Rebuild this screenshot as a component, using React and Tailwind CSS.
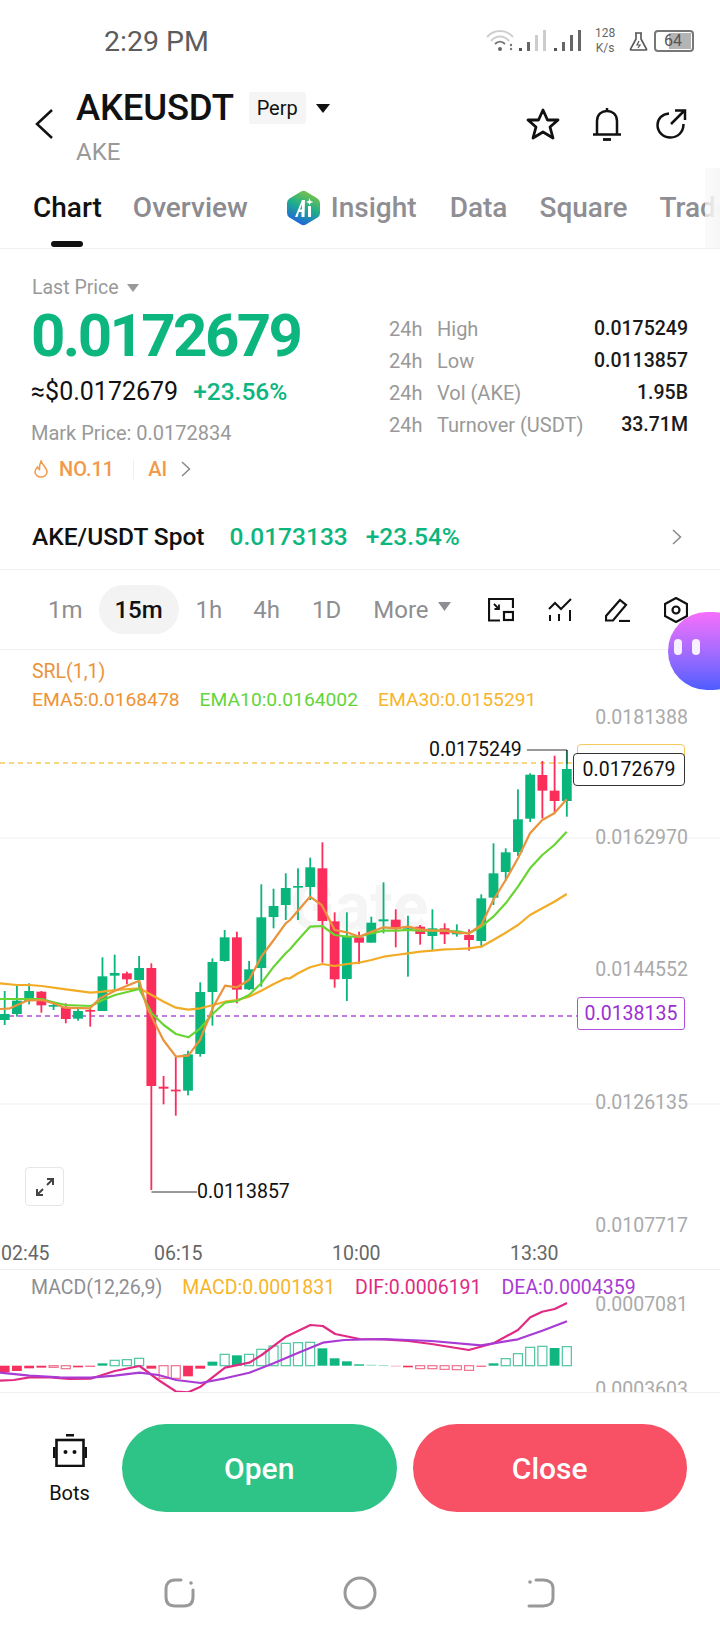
import React from 'react'

const GREEN = '#0ab57b'
const RED = '#fb2d5b'

// candle rows: [wickTop, wickBottom, bodyTop, bodyBottom, up]
const LEFT_CANDLES = [
  [393, 495, 462, 480, 1], [378, 470, 422, 462, 1], [370, 433, 393, 423, 1], [393, 458, 395, 436, 0],
  [425, 450, 435, 440, 1], [430, 490, 442, 477, 0], [447, 482, 453, 476, 1], [445, 500, 450, 455, 0],
  [292, 453, 349, 453, 1], [284, 390, 339, 347, 1], [335, 373, 340, 358, 0], [288, 390, 324, 360, 1],
  [310, 990, 324, 678, 0], [648, 733, 680, 686, 0], [590, 767, 689, 694, 0], [572, 706, 583, 692, 1],
  [367, 590, 396, 582, 1], [295, 497, 306, 396, 1], [210, 305, 232, 303, 1], [215, 430, 232, 389, 0],
  [303, 390, 328, 388, 1], [73, 380, 172, 324, 1], [86, 205, 138, 171, 1], [40, 180, 84, 135, 1],
].map(r => [860 + r[0] / 3, 860 + r[1] / 3, 860 + r[2] / 3, 860 + r[3] / 3, r[4]])

const RIGHT_CANDLES = [
  [385, 540, 438, 443, 1], [353, 480, 382, 441, 1], [307, 668, 385, 543, 0], [517, 743, 544, 718, 0],
  [517, 783, 590, 717, 1], [575, 672, 592, 608, 0], [530, 608, 548, 608, 1], [427, 580, 538, 544, 1],
  [508, 622, 539, 567, 0], [527, 710, 565, 572, 1], [555, 614, 560, 582, 0], [508, 632, 565, 588, 1],
  [550, 612, 565, 583, 0], [553, 590, 572, 583, 1], [568, 632, 585, 600, 0], [463, 622, 475, 603, 1],
  [310, 495, 400, 473, 1], [325, 422, 337, 396, 1], [148, 348, 238, 336, 1], [100, 246, 104, 236, 1],
  [63, 235, 105, 152, 0], [47, 220, 152, 183, 0], [30, 230, 87, 183, 1],
].map(r => [740 + r[0] / 3, 740 + r[1] / 3, 740 + r[2] / 3, 740 + r[3] / 3, r[4]])

const CANDLES = [...LEFT_CANDLES, ...RIGHT_CANDLES]

const joinLine = (a, b) => [
  ...a.map(([x, y]) => `${(x / 3).toFixed(1)},${(860 + y / 3).toFixed(1)}`),
  ...b.map(([x, y]) => `${(290 + x / 3).toFixed(1)},${(740 + y / 3).toFixed(1)}`),
].join(' ')

const EMA5 = joinLine(
  [[0, 447], [30, 445], [80, 422], [125, 420], [160, 430], [195, 443], [270, 445], [300, 415], [345, 392], [418, 362], [440, 440], [490, 540], [528, 590], [565, 587], [600, 540], [640, 440], [675, 377], [711, 382], [747, 360], [784, 290], [821, 240], [857, 190]],
  [[0, 540], [60, 470], [95, 495], [134, 570], [171, 577], [207, 590], [244, 575], [281, 562], [317, 565], [354, 560], [391, 568], [427, 572], [464, 572], [500, 578], [537, 580], [574, 555], [610, 480], [647, 420], [684, 355], [720, 280], [757, 240], [793, 220], [830, 178]],
)
const EMA10 = joinLine(
  [[0, 417], [50, 417], [88, 417], [125, 417], [160, 427], [198, 435], [272, 438], [308, 420], [345, 405], [418, 387], [455, 460], [491, 495], [528, 522], [565, 532], [601, 505], [640, 460], [675, 428], [711, 423], [747, 405], [784, 370], [821, 320], [857, 280]],
  [[0, 628], [24, 600], [60, 560], [97, 558], [134, 585], [171, 590], [207, 590], [244, 580], [281, 572], [317, 572], [354, 570], [391, 572], [427, 572], [464, 572], [500, 575], [537, 580], [574, 560], [610, 530], [647, 490], [684, 440], [720, 385], [757, 345], [793, 315], [830, 275]],
)
const EMA30 = joinLine(
  [[0, 370], [50, 375], [88, 375], [125, 378], [198, 388], [272, 398], [308, 395], [345, 390], [418, 385], [455, 405], [491, 425], [528, 443], [565, 449], [601, 445], [640, 435], [675, 425], [711, 420], [747, 410], [784, 392], [821, 372], [857, 355]],
  [[0, 715], [24, 700], [60, 682], [97, 672], [134, 678], [171, 672], [207, 668], [244, 660], [281, 650], [317, 645], [354, 640], [391, 635], [427, 632], [464, 628], [500, 627], [537, 625], [574, 620], [610, 600], [647, 578], [684, 555], [720, 525], [757, 505], [793, 485], [830, 462]],
)

// macd bars: [value top or bottom edge, filled, faint]
const MACD_BARS = [
  [337, 1], [333, 1], [325, 1], [323, 1], [322, 0], [326, 0], [322, 1], [320, 1], [310, 1], [301, 0], [299, 0], [295, 0],
  [326, 1], [355, 0], [355, 0], [349, 1], [326, 1], [305, 1], [283, 0], [286, 1], [283, 0], [268, 0], [258, 0], [250, 0],
  [248, 0], [247, 0], [265, 1], [295, 1], [304, 1], [313, 1], [314, 1, 1], [315, 1, 1], [318, 1, 1], [322, 1], [326, 0], [326, 0],
  [328, 0], [329, 0], [331, 0], [320, 1], [310, 1], [296, 0], [281, 0], [262, 0], [259, 0], [264, 1], [260, 0],
]

const macdLine = pts => pts.map(([x, y]) => `${(x / 2.178).toFixed(1)},${(1260 + y / 3).toFixed(1)}`).join(' ')
const DIF = macdLine([[0, 362], [30, 360], [64, 352], [110, 352], [150, 357], [197, 356], [250, 333], [304, 318], [345, 360], [384, 395], [410, 397], [437, 380], [490, 323], [543, 308], [570, 285], [623, 230], [676, 195], [703, 198], [730, 222], [783, 237], [836, 238], [889, 243], [940, 252], [1021, 270], [1075, 250], [1128, 210], [1155, 172], [1181, 155], [1208, 147], [1235, 129]])
const DEA = macdLine([[0, 338], [64, 347], [130, 352], [197, 353], [250, 347], [304, 338], [345, 345], [384, 360], [437, 369], [490, 355], [543, 338], [596, 310], [650, 278], [703, 248], [750, 240], [836, 237], [940, 243], [1048, 256], [1128, 238], [1181, 212], [1235, 184]])

const candleX = i => 4.7 + 12.22 * i

function StatusIcons() {
  return (
    <div className="flex items-center ml-auto pr-[26px]">
      <svg width="36" height="24" viewBox="0 0 36 24" fill="none" className="mt-[-2px]">
        <path d="M8 9C15 1 27 1 34 9" stroke="#cfcfcf" strokeWidth="2" />
        <path d="M12 13C17 7 25 7 30 13" stroke="#cfcfcf" strokeWidth="2" />
        <path d="M16 16C19 13 23 13 26 16" stroke="#777" strokeWidth="2" />
        <circle cx="21" cy="21" r="2" fill="#666" />
        <circle cx="32" cy="17" r="1.2" fill="#777" />
        <circle cx="32" cy="21" r="1.2" fill="#777" />
      </svg>
      <svg width="62" height="24" viewBox="0 0 62 24" className="ml-[4px] mr-[14px]">
        <rect x="0" y="19" width="3" height="3" fill="#555" />
        <rect x="8" y="13" width="3" height="9" fill="#666" />
        <rect x="16" y="6" width="3" height="16" fill="#ccc" />
        <rect x="24" y="1" width="3" height="21" fill="#ccc" />
        <rect x="35" y="19" width="3" height="3" fill="#555" />
        <rect x="43" y="13" width="3" height="9" fill="#666" />
        <rect x="51" y="6" width="3" height="16" fill="#666" />
        <rect x="59" y="1" width="3" height="21" fill="#666" />
      </svg>
      <div className="w-[20px] text-[12px] leading-[15px] text-[#666] text-center mr-[14px]">128<br />K/s</div>
      <svg width="19" height="19" viewBox="0 0 19 19" fill="none" stroke="#555" strokeWidth="1.6" className="mr-[6px]">
        <path d="M6 1H13M7 1V7L1.5 17C1 18 2 18 2.5 18H16.5C17 18 18 18 17.5 17L12 7V1" />
        <path d="M10 9L8 13H11L9 16" strokeWidth="1.2" />
      </svg>
      <div className="relative w-[40px] h-[22px] rounded-[4px] border-2 border-[#777] flex items-center">
        <div className="absolute left-[13px] right-[1px] top-[1px] bottom-[1px] bg-[#b4b4b4]" />
        <span className="relative pl-[8px] text-[16px] leading-none text-[#555]">64</span>
      </div>
    </div>
  )
}

function AiLogo() {
  return (
    <svg width="33" height="36" viewBox="0 0 33 36" className="ml-[6px] mr-[11px] shrink-0">
      <defs>
        <linearGradient id="hexFill" x1="0.8" y1="0" x2="0.4" y2="1">
          <stop offset="0" stopColor="#8bc53f" />
          <stop offset="0.5" stopColor="#1fae8a" />
          <stop offset="1" stopColor="#1f63e0" />
        </linearGradient>
      </defs>
      <path d="M14 1.5Q16.5 0 19 1.5L30.500 8.500Q33 10 33 13V23Q33 26 30.500 27.500L19 34.500Q16.500 36 14 34.500L2.500 27.500Q0 26 0 23V13Q0 10 2.500 8.500Z" fill="url(#hexFill)" />
      <path d="M8 27L15 10H18L17.500 27H14.500V22H12L10.500 27ZM13 19.500H14.800L15 14.500Z" fill="#fff" />
      <rect x="21" y="16" width="3" height="11" fill="#fff" />
      <path d="M22.500 8L23.500 11L26.500 12L23.500 13L22.500 15L21.500 13L19 12L21.500 11Z" fill="#fff" />
    </svg>
  )
}

function ChartIcons() {
  return (
    <div className="flex items-center ml-auto pr-[32px]">
      <svg width="26" height="24" viewBox="0 0 26 24" fill="none" stroke="#111" strokeWidth="2.2">
        <path d="M12 22.500H1V1H25V10" />
        <path d="M6 6L11 11M11 6.500V11H6.500" strokeWidth="1.800" />
        <rect x="16" y="14" width="9" height="8" />
      </svg>
      <svg width="24" height="24" viewBox="0 0 24 24" fill="none" stroke="#111" strokeWidth="2" className="ml-[34px]">
        <path d="M1 11L7 5L13 11L23 1" />
        <path d="M2 17V23M11 16V23M22 12V23" />
      </svg>
      <svg width="25" height="24" viewBox="0 0 25 24" fill="none" stroke="#111" strokeWidth="2.2" className="ml-[33px]">
        <path d="M1 18L15 2L21 7L8 22.500H1Z" />
        <path d="M14 23H25" />
      </svg>
      <svg width="24" height="26" viewBox="0 0 24 26" fill="none" stroke="#111" strokeWidth="2.2" className="ml-[34px]">
        <path d="M12 1L23 7V19L12 25L1 19V7Z" />
        <circle cx="12" cy="13" r="3.500" />
      </svg>
    </div>
  )
}

function PriceChart() {
  return (
    <svg width="720" height="619" viewBox="0 650 720 619" className="block relative">
      <line x1="0" x2="720" y1="838" y2="838" stroke="#f0f0f0" />
      <line x1="0" x2="720" y1="1104" y2="1104" stroke="#f0f0f0" />
      <line x1="0" x2="573" y1="763" y2="763" stroke="#f5c95b" strokeWidth="1.300" strokeDasharray="5 4" />
      <line x1="0" x2="577" y1="1016" y2="1016" stroke="#b04fdc" strokeWidth="1.300" strokeDasharray="5 4" />
      {CANDLES.map((c, i) => {
        const x = candleX(i)
        const fill = c[4] ? GREEN : RED
        return (
          <g key={i} fill={fill}>
            <rect x={x - 0.9} y={c[0]} width="1.800" height={c[1] - c[0]} />
            <rect x={x - 4.9} y={c[2]} width="9.800" height={Math.max(c[3] - c[2], 1.5)} />
          </g>
        )
      })}
      <polyline points={EMA30} fill="none" stroke="#f2ab25" strokeWidth="2.200" strokeLinejoin="round" />
      <polyline points={EMA10} fill="none" stroke="#69d432" strokeWidth="2.200" strokeLinejoin="round" />
      <polyline points={EMA5} fill="none" stroke="#e9933c" strokeWidth="2.200" strokeLinejoin="round" />
      {/* high / low markers */}
      <path d="M527 750H567V764" fill="none" stroke="#333" strokeWidth="1" />
      <path d="M151.500 1192H197" fill="none" stroke="#333" strokeWidth="1" />
    </svg>
  )
}

function MacdChart() {
  return (
    <svg width="720" height="122" viewBox="0 1270 720 122" className="block">
      {MACD_BARS.map(([edge, filled, faint], i) => {
        const base = 1365.7
        const y = 1260 + edge / 3
        const up = y < base
        const color = up ? '#10b67f' : '#f5305f'
        const top = Math.min(y, base)
        const h = Math.max(Math.abs(y - base), 0.8)
        if (filled) {
          return <rect key={i} x={candleX(i) - 4.9} y={top} width="9.800" height={h} fill={color} opacity={faint ? 0.45 : 1} />
        }
        return (
          <rect key={i} x={candleX(i) - 4.5} y={top} width="9" height={h} fill="none" stroke={up ? '#4fc4a0' : '#f0708f'} strokeWidth="1.200" />
        )
      })}
      <polyline points={DIF} fill="none" stroke="#e02a83" strokeWidth="2.200" strokeLinejoin="round" />
      <polyline points={DEA} fill="none" stroke="#a93bd4" strokeWidth="2.200" strokeLinejoin="round" />
    </svg>
  )
}

const stats = [
  ['High', '0.0175249'],
  ['Low', '0.0113857'],
  ['Vol (AKE)', '1.95B'],
  ['Turnover (USDT)', '33.71M'],
]

export default function App() {
  return (
    <div className="relative w-[720px] h-[1640px] overflow-hidden bg-white font-['Roboto',sans-serif] text-[#111]">
      {/* Status bar */}
      <div className="flex items-center h-[82px] pl-[104px]">
        <span className="pt-[2px] text-[28.500px] leading-none text-[#5c5c5c]">2:29 PM</span>
        <StatusIcons />
      </div>

      {/* Title */}
      <div className="flex items-start h-[86px] pl-[35px]">
        <svg width="18" height="30" viewBox="0 0 18 30" fill="none" stroke="#111" strokeWidth="2.500" className="mt-[27px]">
          <path d="M17 1L2 15L17 29" />
        </svg>
        <div className="ml-[23px] mt-[6px]">
          <div className="flex items-center h-[40px]">
            <span className="text-[36.500px] leading-[40px] font-medium tracking-[-0.2px]">AKEUSDT</span>
            <span className="ml-[15px] flex items-center justify-center w-[57px] h-[32px] rounded-[3px] bg-[#f5f5f5] text-[20px]">Perp</span>
            <svg width="14" height="9" viewBox="0 0 14 9" className="ml-[10px]">
              <path d="M0 0H14L7 9Z" fill="#111" />
            </svg>
          </div>
          <div className="mt-[11px] text-[24px] leading-[26px] text-[#999]">AKE</div>
        </div>
        <div className="flex items-center ml-auto pr-[33px] mt-[25px]">
          <svg width="34" height="32" viewBox="0 0 34 32" fill="none" stroke="#111" strokeWidth="2.800" strokeLinejoin="round">
            <path d="M17 2L21.500 12H32L24 19L27 30L17 24L7 30L10 19L2 12H12.500Z" />
          </svg>
          <svg width="30" height="34" viewBox="0 0 30 34" fill="none" stroke="#111" strokeWidth="2.500" className="ml-[32px]">
            <path d="M15 1V4M5 27V14C5 7 10 4 15 4C20 4 25 7 25 14V27M1 27.500H29" />
            <path d="M11 32.500H19" strokeWidth="2.800" />
          </svg>
          <svg width="31" height="30" viewBox="0 0 31 30" fill="none" stroke="#111" strokeWidth="2.500" className="ml-[34px]">
            <path d="M13 4.500C6 5 1.500 10 1.500 16C1.500 23 7 28.500 14.500 28.500C22 28.500 27.500 23 27.500 15" />
            <path d="M15 15L28 2M19 1.500H29V11" />
          </svg>
        </div>
      </div>

      {/* Tabs */}
      <div className="relative flex items-center h-[81px] pl-[33px] gap-[33px] border-b border-[#efefef] text-[28px] text-[#8e8e93] whitespace-nowrap overflow-hidden">
        <span className="relative font-medium text-[#111]">
          Chart
          <span className="absolute left-[18px] top-[54px] w-[32px] h-[6px] rounded-full bg-[#111]" />
        </span>
        <span className="ml-[-2px] font-medium text-[#8b8b90]">Overview</span>
        <span className="flex items-center font-medium">
          <AiLogo />
          Insight
        </span>
        <span className="font-medium">Data</span>
        <span className="ml-[-1px] font-medium">Square</span>
        <span className="ml-[-1px] font-medium">Trade</span>
        <div className="absolute right-0 top-0 bottom-0 w-[15px] bg-gradient-to-r from-[#f8f8f8]/70 to-[#f7f7f7]" />
      </div>

      {/* Price block */}
      <div className="flex h-[256px]">
        <div className="pl-[32px] pt-[27px] w-[389px]">
          <div className="flex items-center text-[19.500px] leading-[24px] text-[#999]">
            Last Price
            <svg width="12" height="8" viewBox="0 0 12 8" className="ml-[8px]"><path d="M0 0H12L6 8Z" fill="#999" /></svg>
          </div>
          <div className="mt-[6px] ml-[-1px] text-[60px] leading-[60px] font-bold tracking-[-2.600px] text-[#0cb67e]">0.0172679</div>
          <div className="mt-[11px] ml-[-1px] flex items-baseline leading-[30px] text-[25px]">
            <span>≈$0.0172679</span>
            <span className="ml-[15px] text-[24.500px] font-medium text-[#0cb67e]">+23.56%</span>
          </div>
          <div className="mt-[14px] ml-[-1px] text-[20px] leading-[24px] text-[#999]">Mark Price: 0.0172834</div>
          <div className="mt-[12px] flex items-center text-[20px] leading-[24px] font-medium text-[#f2994a]">
            <svg width="16" height="18" viewBox="0 0 16 18" fill="none" stroke="#f2994a" strokeWidth="1.500" className="ml-[1px]">
              <path d="M8 1C9 5 14 7 14 12C14 15 11 17 8 17C5 17 2 15 2 12C2 9.500 3.500 8 4.500 7C5 8.500 5.500 9 6.500 9.500C6.500 7 6.500 4 8 1Z" />
            </svg>
            <span className="ml-[10px]">NO.11</span>
            <span className="ml-[19px] mr-[14px] w-[1px] h-[20px] bg-[#f0f0f0]" />
            <span>AI</span>
            <svg width="10" height="16" viewBox="0 0 10 16" fill="none" stroke="#888" strokeWidth="1.500" className="ml-[14px]"><path d="M1 1L8.500 8L1 15" /></svg>
          </div>
        </div>
        <div className="w-[299px] pt-[64px] text-[20px] text-[#999]">
          {stats.map(([label, value]) => (
            <div key={label} className="flex items-center h-[32px]">
              <span className="w-[48px]">24h</span>
              <span>{label}</span>
              <span className="ml-auto text-[19.500px] font-medium text-[#1a1a1a]">{value}</span>
            </div>
          ))}
        </div>
      </div>

      {/* Spot row */}
      <div className="flex items-center h-[65px] pl-[32px] pr-[38px] border-b border-[#efefef] text-[24.500px]">
        <span className="font-medium">AKE/USDT Spot</span>
        <span className="ml-[25px] font-medium text-[#0cb67e]">0.0173133</span>
        <span className="ml-[18px] font-medium text-[#0cb67e]">+23.54%</span>
        <svg width="10" height="16" viewBox="0 0 10 16" fill="none" stroke="#888" strokeWidth="1.500" className="ml-auto"><path d="M1 1L8.500 8L1 15" /></svg>
      </div>

      {/* Interval row */}
      <div className="flex items-center h-[80px] border-b border-[#efefef] pl-[48px] text-[24px] text-[#8e8e93]">
        <span>1m</span>
        <span className="ml-[16px] flex items-center justify-center w-[80px] h-[49px] rounded-full bg-[#f3f3f3] font-medium text-[#111]">15m</span>
        <span className="ml-[17px]">1h</span>
        <span className="ml-[31px]">4h</span>
        <span className="ml-[32px]">1D</span>
        <span className="ml-[32px]">More</span>
        <svg width="13" height="9" viewBox="0 0 13 9" className="ml-[9px] mt-[-6px]"><path d="M0 0H13L6.500 9Z" fill="#8e8e93" /></svg>
        <ChartIcons />
      </div>

      {/* Main chart */}
      <div className="relative h-[620px] border-b border-[#efefef] text-[19.500px] leading-[24px]">
        <span className="absolute left-[290px] top-[224px] text-[66px] leading-[66px] font-bold text-[#f5f5f5]">Gate</span>
        <PriceChart />
        <div className="absolute left-[32px] top-[10px] text-[#e9933c]">SRL(1,1)</div>
        <div className="absolute left-[32px] top-[38px] flex gap-[20px] whitespace-nowrap text-[19.250px]">
          <span className="text-[#ee9336]">EMA5:0.0168478</span>
          <span className="text-[#62d53a]">EMA10:0.0164002</span>
          <span className="text-[#f8b52c]">EMA30:0.0155291</span>
        </div>
        <span className="absolute right-[32px] top-[56px] text-[#aaa]">0.0181388</span>
        <span className="absolute right-[32px] top-[176px] text-[#aaa]">0.0162970</span>
        <span className="absolute right-[32px] top-[308px] text-[#aaa]">0.0144552</span>
        <span className="absolute right-[32px] top-[441px] text-[#aaa]">0.0126135</span>
        <span className="absolute right-[32px] top-[564px] text-[#aaa]">0.0107717</span>
        <span className="absolute left-[429px] top-[88px]">0.0175249</span>
        <div className="absolute left-[577px] top-[94px] w-[108px] h-[36px] rounded-[4px] border border-[#f5c95b]" />
        <div className="absolute left-[573px] top-[103px] w-[112px] h-[33px] rounded-[4px] border border-[#333] bg-white flex items-center justify-center">0.0172679</div>
        <div className="absolute left-[577px] top-[347px] w-[108px] h-[33px] rounded-[3px] border border-[#b04fdc] bg-white flex items-center justify-center text-[#9b30d0]">0.0138135</div>
        <span className="absolute left-[197px] top-[530px]">0.0113857</span>
        <div className="absolute left-[25px] top-[517px] w-[39px] h-[39px] rounded-[4px] border border-[#e6e6e6] bg-white flex items-center justify-center">
          <svg width="20" height="20" viewBox="0 0 20 20" fill="none" stroke="#444" strokeWidth="2">
            <path d="M2 18L8 12M2 12V18H8M18 2L12 8M12 2H18V8" />
          </svg>
        </div>
        <span className="absolute left-[1px] top-[592px] text-[#666]">02:45</span>
        <span className="absolute left-[154px] top-[592px] text-[#666]">06:15</span>
        <span className="absolute left-[332px] top-[592px] text-[#666]">10:00</span>
        <span className="absolute left-[510px] top-[592px] text-[#666]">13:30</span>
      </div>

      {/* MACD */}
      <div className="relative h-[123px] overflow-hidden border-b border-[#efefef] text-[19.500px] leading-[24px]">
        <MacdChart />
        <div className="absolute left-[31px] top-[6px] flex gap-[20px] whitespace-nowrap">
          <span className="text-[#8e8e93]">MACD(12,26,9)</span>
          <span className="text-[#f8b52c]">MACD:0.0001831</span>
          <span className="text-[#e02a83]">DIF:0.0006191</span>
          <span className="text-[#a93bd4]">DEA:0.0004359</span>
        </div>
        <span className="absolute right-[32px] top-[23px] text-[#aaa]">0.0007081</span>
        <span className="absolute right-[32px] top-[108px] text-[#aaa]">0.0003603</span>
      </div>

      {/* Actions */}
      <div className="flex items-start pl-[50px] pr-[33px] pt-[31px]">
        <div className="flex flex-col items-center w-[39px]">
          <svg width="34" height="33" viewBox="0 0 34 33" fill="none" className="mt-[10px]">
            <rect x="13" y="0" width="8" height="2.500" fill="#111" />
            <rect x="3.500" y="6" width="27" height="26" stroke="#111" strokeWidth="2.600" />
            <rect x="0" y="13" width="2.500" height="11" fill="#111" />
            <rect x="31.500" y="13" width="2.500" height="11" fill="#111" />
            <circle cx="12.500" cy="18" r="2" fill="#111" />
            <circle cx="21.500" cy="18" r="2" fill="#111" />
          </svg>
          <span className="mt-[14px] text-[20px] leading-[24px]">Bots</span>
        </div>
        <button className="ml-[33px] w-[275px] h-[88px] rounded-full bg-[#2ec487] text-white text-[30px] font-medium">Open</button>
        <button className="ml-[16px] w-[275px] h-[88px] rounded-full bg-[#f85064] text-white text-[30px] font-medium">Close</button>
      </div>

      {/* Nav bar */}
      <div className="flex items-center mt-[64px] pl-[164px]">
        <svg width="32" height="30" viewBox="0 0 32 30" fill="none" stroke="#999" strokeWidth="3">
          <path d="M17 2H11C5 2 2 6 2 11V19C2 25 5 28 11 28H20C26 28 29 25 29 19V12" strokeLinecap="round" />
          <circle cx="27" cy="5" r="1.800" fill="#999" stroke="none" />
        </svg>
        <svg width="34" height="34" viewBox="0 0 34 34" fill="none" stroke="#999" strokeWidth="3" className="ml-[147px]">
          <circle cx="17" cy="17" r="15" />
        </svg>
        <svg width="28" height="30" viewBox="0 0 28 30" fill="none" stroke="#999" strokeWidth="3" className="ml-[150px]">
          <path d="M9 2H16C22 2 26 5 26 10V20C26 25 22 28 16 28H2" strokeLinecap="round" />
          <circle cx="3" cy="4" r="1.800" fill="#999" stroke="none" />
        </svg>
      </div>

      {/* Floating assistant */}
      <div className="absolute left-[668px] top-[612px] w-[84px] h-[78px] rounded-full bg-gradient-to-b from-[#f76dfb] to-[#4d5cff] flex items-center pl-[6px] gap-[10px]">
        <span className="w-[8px] h-[16px] rounded-full bg-white/90 mt-[-8px]" />
        <span className="w-[8px] h-[16px] rounded-full bg-white/90 mt-[-8px]" />
      </div>
    </div>
  )
}
